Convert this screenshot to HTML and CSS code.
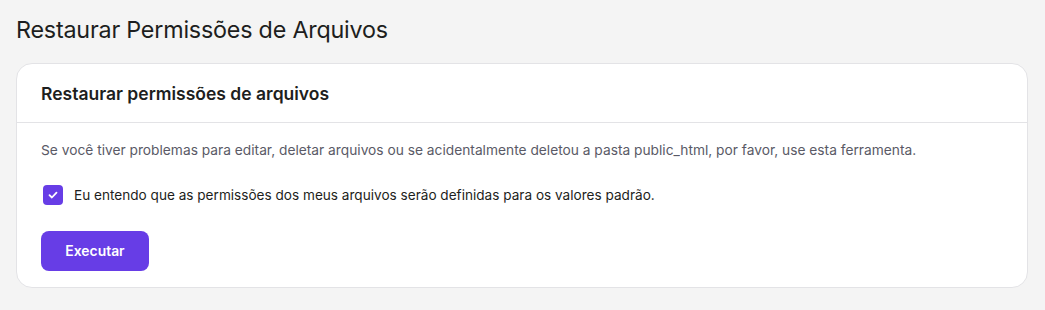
FILE: index.html
```html
<!DOCTYPE html>
<html lang="pt-BR">
  <head>
    <meta charset="UTF-8" />
    <meta name="viewport" content="width=device-width, initial-scale=1.0"/>
    <title>Restaurar Permissões de Arquivos</title>
    <link rel="stylesheet" href="styles.css">
  </head>
  <body>
    <div class="page">
      <h1 class="page-title">Restaurar Permissões de Arquivos</h1>
      <div class="card">
        <div class="card-header">
          <h2>Restaurar permissões de arquivos</h2>
        </div>
        <div class="card-body">
          <p class="hint">Se você tiver problemas para editar, deletar arquivos ou se acidentalmente deletou a pasta public_html, por favor, use esta ferramenta.</p>
          <label class="check-row">
            <span class="checkbox">
              <svg width="12" height="12" viewBox="0 0 12 12" fill="none">
                <path d="M2.5 6.2 L4.9 8.5 L9.5 3.6" stroke="#fff" stroke-width="1.8" stroke-linecap="round" stroke-linejoin="round"/>
              </svg>
            </span>
            <span>Eu entendo que as permissões dos meus arquivos serão definidas para os valores padrão.</span>
          </label>
          <button type="button" class="run">Executar</button>
        </div>
      </div>
    </div>
  </body>
</html>
```

FILE: styles.css
```css
body {
  font-family: 'Inter', 'Noto Sans', sans-serif;
  background: #f4f4f4;
  margin: 0;
  color: #1d1e20;
}

.page {
  padding: 14px 17px 0 16px;
}

.page-title {
  font-size: 23.3px;
  font-weight: 400;
  margin: 0 0 17px;
  line-height: 32px;
  letter-spacing: -0.2px;
}

.card {
  background: white;
  border: 1px solid #e3e3e6;
  border-radius: 16px;
}

.card-header {
  height: 58px;
  display: flex;
  align-items: center;
  padding: 0 24px;
  border-bottom: 1px solid #e3e3e6;
}

.card-header h2 {
  font-size: 17.5px;
  font-weight: 600;
  margin: 0;
}

.card-body {
  padding: 16px 24px 16px;
}

.hint {
  font-size: 13.75px;
  color: #5a5a66;
  margin: 0 0 24px;
  line-height: 22px;
}

.check-row {
  display: flex;
  align-items: center;
  gap: 11px;
  font-size: 13.6px;
  margin: 0 0 26px 2px;
}

.checkbox {
  width: 20px;
  height: 20px;
  border-radius: 4px;
  background: #673de6;
  display: flex;
  justify-content: center;
  align-items: center;
}

.run {
  width: 108px;
  height: 40px;
  background: #673de6;
  color: white;
  border: none;
  border-radius: 8px;
  font-family: inherit;
  font-size: 13.9px;
  font-weight: 600;
  cursor: pointer;
}
```
